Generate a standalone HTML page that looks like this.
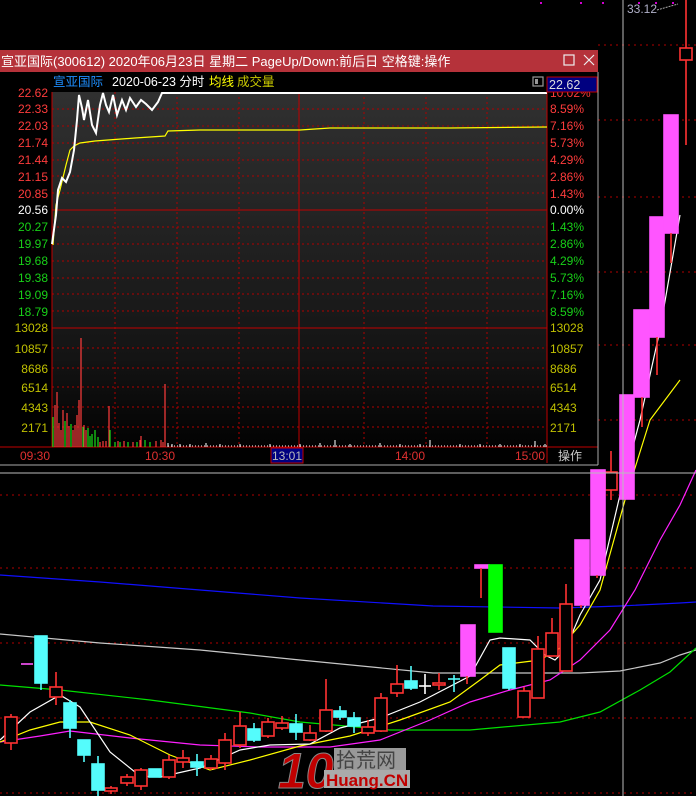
<!DOCTYPE html>
<html><head><meta charset="utf-8"><style>
html,body{margin:0;padding:0;background:#000;width:696px;height:796px;overflow:hidden}
svg{display:block}
text{font-family:"Liberation Sans","Noto Sans CJK SC",sans-serif}
</style></head><body>
<svg width="696" height="796" viewBox="0 0 696 796" xmlns="http://www.w3.org/2000/svg">
<defs>
<linearGradient id="bg" x1="0" y1="0" x2="0" y2="1">
<stop offset="0" stop-color="#303030"/><stop offset="0.55" stop-color="#1c1c1c"/><stop offset="0.75" stop-color="#141414"/><stop offset="1" stop-color="#020202"/>
</linearGradient>
</defs>
<!-- background dotted lines main chart -->
<g stroke="#b00000" stroke-dasharray="2,4" stroke-width="1">
<line x1="598" y1="45" x2="696" y2="45"/><line x1="598" y1="120" x2="696" y2="120"/>
<line x1="598" y1="197" x2="696" y2="197"/><line x1="598" y1="272" x2="696" y2="272"/>
<line x1="598" y1="345" x2="696" y2="345"/><line x1="598" y1="420" x2="696" y2="420"/>
<line x1="0" y1="495" x2="696" y2="495"/><line x1="0" y1="568" x2="696" y2="568"/>
<line x1="0" y1="643" x2="696" y2="643"/><line x1="0" y1="718" x2="696" y2="718"/>
<line x1="0" y1="793" x2="696" y2="793"/>
</g>
<g fill="#d000d0"><rect x="602" y="2" width="2" height="2"/><rect x="638" y="2" width="2" height="2"/><rect x="655" y="2" width="2" height="2"/><rect x="672" y="2" width="2" height="2"/><rect x="540" y="2" width="2" height="2"/><rect x="580" y="2" width="2" height="2"/></g>
<text x="627" y="13" fill="#b0b0c8" font-size="12">33.12</text>
<path d="M657 10 L678 4" stroke="#aaa" stroke-dasharray="2,1" fill="none"/>

<!-- MA lines -->
<g fill="none" stroke-width="1.2">
<polyline stroke="#1010ff" points="0,575 100,582 200,590 300,598 433,606 560,608 620,606 680,603 696,602"/>
<polyline stroke="#c8c8c8" points="0,634 100,643 200,650 300,660 433,673 580,673 620,671 660,663 680,655 696,650"/>
<polyline stroke="#00e000" points="0,685 60,690 150,700 250,713 300,722 390,730 470,730 560,722 600,712 640,690 670,672 696,648"/>
<polyline stroke="#ff20ff" points="0,742 40,736 70,731 130,738 200,745 260,747 330,747 380,740 430,720 470,702 510,690 550,680 580,660 610,630 635,590 660,540 680,505 696,470"/>
<polyline stroke="#ffff00" points="0,742 30,730 60,722 90,722 130,735 170,755 210,770 250,760 300,746 350,736 400,720 450,702 480,680 500,665 540,660 560,648 580,625 600,590 625,500 650,420 680,380"/>
<polyline stroke="#ffffff" points="0,740 30,712 60,695 80,707 110,752 140,776 160,777 200,768 240,750 270,745 310,744 340,728 380,718 420,702 470,676 490,640 500,638 530,640 545,655 555,660 565,650 580,615 600,580 620,495 640,420 660,330 680,215"/>
</g>

<!-- candles -->
<g stroke-width="1.6">
<!-- red hollow: wick + rect -->
<g stroke="#ff3232" fill="#000">
<line x1="11" y1="714" x2="11" y2="750"/><rect x="5" y="717" width="12" height="26"/>
<line x1="56" y1="672" x2="56" y2="705"/><rect x="50" y="687" width="12" height="10"/>
<line x1="111" y1="786" x2="111" y2="794"/><rect x="105" y="788" width="12" height="3"/>
<line x1="127" y1="774" x2="127" y2="786"/><rect x="121" y="777" width="12" height="6"/>
<line x1="141" y1="768" x2="141" y2="790"/><rect x="135" y="770" width="12" height="16"/>
<line x1="169" y1="755" x2="169" y2="779"/><rect x="163" y="760" width="12" height="17"/>
<line x1="183" y1="750" x2="183" y2="768"/><rect x="177" y="758" width="12" height="4"/>
<line x1="211" y1="755" x2="211" y2="770"/><rect x="205" y="759" width="12" height="9"/>
<line x1="225" y1="733" x2="225" y2="770"/><rect x="219" y="740" width="12" height="23"/>
<line x1="240" y1="712" x2="240" y2="748"/><rect x="234" y="726" width="12" height="19"/>
<line x1="268" y1="718" x2="268" y2="738"/><rect x="262" y="722" width="12" height="14"/>
<line x1="282" y1="716" x2="282" y2="730"/><rect x="276" y="723" width="12" height="5"/>
<line x1="310" y1="725" x2="310" y2="741"/><rect x="304" y="733" width="12" height="7"/>
<line x1="326" y1="679" x2="326" y2="732"/><rect x="320" y="710" width="12" height="21"/>
<line x1="368" y1="720" x2="368" y2="736"/><rect x="362" y="727" width="12" height="6"/>
<line x1="381" y1="693" x2="381" y2="732"/><rect x="375" y="698" width="12" height="33"/>
<line x1="397" y1="665" x2="397" y2="697"/><rect x="391" y="684" width="12" height="9"/>
<line x1="439" y1="673" x2="439" y2="690"/><rect x="433" y="683" width="12" height="2"/>
<line x1="524" y1="687" x2="524" y2="717"/><rect x="518" y="691" width="12" height="26"/>
<line x1="538" y1="636" x2="538" y2="698"/><rect x="532" y="649" width="12" height="49"/>
<line x1="552" y1="618" x2="552" y2="656"/><rect x="546" y="633" width="12" height="23"/>
<line x1="566" y1="584" x2="566" y2="671"/><rect x="560" y="604" width="12" height="67"/>
<line x1="611" y1="451" x2="611" y2="500"/><rect x="605" y="472" width="12" height="18"/>
<line x1="686" y1="0" x2="686" y2="145"/><rect x="680" y="48" width="12" height="12"/>
</g>
<!-- cyan -->
<g stroke="#54fcfc" fill="#54fcfc">
<line x1="41" y1="636" x2="41" y2="690"/><rect x="35" y="636" width="12" height="47"/>
<line x1="70" y1="700" x2="70" y2="738"/><rect x="64" y="703" width="12" height="25"/>
<line x1="84" y1="740" x2="84" y2="762"/><rect x="78" y="740" width="12" height="15"/>
<line x1="98" y1="756" x2="98" y2="796"/><rect x="92" y="764" width="12" height="26"/>
<rect x="149" y="769" width="12" height="8"/>
<line x1="197" y1="754" x2="197" y2="776"/><rect x="191" y="762" width="12" height="5"/>
<line x1="254" y1="723" x2="254" y2="742"/><rect x="248" y="729" width="12" height="11"/>
<line x1="296" y1="714" x2="296" y2="740"/><rect x="290" y="724" width="12" height="8"/>
<line x1="340" y1="706" x2="340" y2="720"/><rect x="334" y="711" width="12" height="6"/>
<line x1="354" y1="712" x2="354" y2="733"/><rect x="348" y="718" width="12" height="8"/>
<line x1="411" y1="666" x2="411" y2="690"/><rect x="405" y="681" width="12" height="7"/>
<line x1="454" y1="675" x2="454" y2="692"/><line x1="448" y1="679" x2="460" y2="679"/>
<line x1="509" y1="648" x2="509" y2="690"/><rect x="503" y="648" width="12" height="40"/>
</g>
<g stroke="#fff"><line x1="425" y1="674" x2="425" y2="694"/><line x1="419" y1="686" x2="431" y2="686"/></g>
<!-- magenta -->
<g stroke="#ff55ff" fill="#ff55ff">
<line x1="21" y1="664" x2="33" y2="664"/>
<rect x="461" y="625" width="14" height="51"/>
<rect x="475" y="565" width="14" height="3"/>
<rect x="575" y="540" width="14" height="65"/>
<rect x="591" y="470" width="14" height="105"/>
<rect x="620" y="395" width="14" height="104"/>
<rect x="634" y="310" width="15" height="87"/>
<rect x="650" y="217" width="14" height="120"/>
<rect x="664" y="115" width="14" height="118"/>
</g>
<g stroke="#ff3232"><line x1="467" y1="676" x2="467" y2="684"/><line x1="481" y1="568" x2="481" y2="598"/><line x1="581" y1="605" x2="581" y2="608"/><line x1="597" y1="575" x2="597" y2="578"/><line x1="642" y1="397" x2="642" y2="427"/><line x1="657" y1="337" x2="657" y2="375"/><line x1="671" y1="233" x2="671" y2="263"/></g>
<rect x="489" y="565" width="13" height="67" fill="#00ff00" stroke="#00ff00"/>
</g>

<!-- watermark -->
<g>
<text x="278" y="788" fill="#c00000" font-size="50" font-weight="bold" font-style="italic" stroke="#888" stroke-width="1">10</text>
<rect x="334" y="748" width="72" height="22" fill="#999"/>
<text x="336" y="767" fill="#444" font-size="20">拾荒网</text>
<rect x="324" y="770" width="86" height="18" fill="#aaa"/>
<text x="326" y="786" fill="#c00000" font-size="17" font-weight="bold">Huang.CN</text>
</g>

<!-- crosshair -->
<line x1="623" y1="0" x2="623" y2="796" stroke="#bbb" stroke-width="1"/>
<line x1="0" y1="473" x2="696" y2="473" stroke="#bbb" stroke-width="1"/>

<!-- POPUP -->
<rect x="0" y="50" width="598" height="415" fill="#000"/>
<rect x="0" y="50" width="598" height="22" fill="#b5323a"/>
<text x="1" y="66" fill="#fff" font-size="13">宣亚国际(300612) 2020年06月23日 星期二 PageUp/Down:前后日 空格键:操作</text>
<rect x="564" y="55" width="10" height="10" fill="none" stroke="#eee" stroke-width="1.2"/>
<path d="M584 55 L594 65 M594 55 L584 65" stroke="#eee" stroke-width="1.2"/>
<text x="53" y="86" fill="#1e8fff" font-size="12.5">宣亚国际</text>
<text x="112" y="86" fill="#fff" font-size="12.5">2020-06-23 分时</text>
<text x="209" y="86" fill="#ffff00" font-size="12.5">均线</text>
<text x="237" y="86" fill="#c8c800" font-size="12.5">成交量</text>
<rect x="533" y="77" width="10" height="9" fill="none" stroke="#999" stroke-width="1.2"/><rect x="535" y="79" width="3" height="5" fill="#999"/>
<rect x="547" y="77" width="50" height="15" fill="#000080" stroke="#c00000"/>
<text x="549" y="89" fill="#ddd" font-size="12.5">22.62</text>

<rect x="52" y="92" width="495" height="355" fill="url(#bg)"/>
<!-- price grid -->
<g stroke="#b00000" stroke-dasharray="2,3">
<line x1="52" y1="109" x2="547" y2="109"/><line x1="52" y1="126" x2="547" y2="126"/><line x1="52" y1="143" x2="547" y2="143"/><line x1="52" y1="160" x2="547" y2="160"/><line x1="52" y1="176" x2="547" y2="176"/><line x1="52" y1="193" x2="547" y2="193"/>
<line x1="52" y1="227" x2="547" y2="227"/><line x1="52" y1="244" x2="547" y2="244"/><line x1="52" y1="261" x2="547" y2="261"/><line x1="52" y1="278" x2="547" y2="278"/><line x1="52" y1="294" x2="547" y2="294"/><line x1="52" y1="311" x2="547" y2="311"/>
<line x1="52" y1="348" x2="547" y2="348"/><line x1="52" y1="368" x2="547" y2="368"/><line x1="52" y1="387" x2="547" y2="387"/><line x1="52" y1="407" x2="547" y2="407"/><line x1="52" y1="427" x2="547" y2="427"/>
<line x1="115" y1="92" x2="115" y2="447"/><line x1="177" y1="92" x2="177" y2="447"/><line x1="239" y1="92" x2="239" y2="447"/><line x1="364" y1="92" x2="364" y2="447"/><line x1="426" y1="92" x2="426" y2="447"/><line x1="487" y1="92" x2="487" y2="447"/>
</g>
<g stroke="#c00000" stroke-width="1">
<line x1="52" y1="210" x2="547" y2="210"/><line x1="52" y1="328" x2="547" y2="328"/>
<line x1="299" y1="92" x2="299" y2="447"/>
<line x1="52" y1="92" x2="52" y2="447"/><line x1="547" y1="92" x2="547" y2="463"/>
<line x1="0" y1="447" x2="598" y2="447"/>
</g>
<!-- volume bars -->
<g stroke-width="1.2">
<g stroke="#ff3c3c">
<path d="M55 447V405 M57 447V392 M59 447V423 M61 447V430 M63 447V410 M67 447V413 M69 447V426 M73 447V430 M75 447V425 M77 447V415 M79 447V400 M81 447V338 M84 447V425 M86 447V430 M109 447V406 M141 447V436 M165 447V384 M161 447V440 M163 447V442"/>
</g>
<g stroke="#18e018">
<path d="M53 447V417 M65 447V421 M71 447V424 M83 447V427 M88 447V428 M90 447V436 M92 447V434 M95 447V430 M98 447V437 M110 447V430 M115 447V442 M120 447V442 M128 447V442 M137 447V442 M145 447V440 M150 447V442"/>
</g>
<g stroke="#ff3c3c"><path d="M100 447V442 M103 447V441 M106 447V441 M118 447V441 M124 447V441 M133 447V442 M140 447V440 M156 447V441"/></g>
<g stroke="#ddd"><path d="M168 447V443 M172 447V444 M180 447V444 M190 447V444 M206 447V443 M220 447V444 M240 447V444 M270 447V444 M300 447V444 M320 447V443 M335 447V440 M350 447V444 M380 447V443 M400 447V444 M420 447V444 M430 447V440 M460 447V444 M480 447V444 M500 447V444 M520 447V444 M535 447V441 M545 447V444"/></g>
<path d="M168 446H547" stroke="#ccc" stroke-dasharray="1,2"/>
</g>
<!-- price & avg lines -->
<polyline fill="none" stroke="#ffff00" stroke-width="1.2" points="53,245 56,205 60,190 66,165 70,150 74,146 80,143 95,141 108,140 135,138 165,136 168,131 200,130 300,130 330,128 450,128 547,127"/>
<polyline fill="none" stroke="#fff" stroke-width="2" points="52,244 56,215 58,190 62,178 66,182 70,172 74,150 77,120 79,95 82,108 84,120 88,100 92,125 96,133 100,105 103,93 106,105 109,112 113,95 117,115 122,100 126,110 130,98 136,107 141,100 146,104 152,110 158,102 162,93 547,93"/>

<!-- left labels -->
<g font-size="12" text-anchor="end">
<g fill="#ff3c3c"><text x="48" y="97">22.62</text><text x="48" y="113">22.33</text><text x="48" y="130">22.03</text><text x="48" y="147">21.74</text><text x="48" y="164">21.44</text><text x="48" y="181">21.15</text><text x="48" y="198">20.85</text></g>
<text x="48" y="214" fill="#fff">20.56</text>
<g fill="#18d018"><text x="48" y="231">20.27</text><text x="48" y="248">19.97</text><text x="48" y="265">19.68</text><text x="48" y="282">19.38</text><text x="48" y="299">19.09</text><text x="48" y="316">18.79</text></g>
<g fill="#c0c000"><text x="48" y="332">13028</text><text x="48" y="353">10857</text><text x="48" y="373">8686</text><text x="48" y="392">6514</text><text x="48" y="412">4343</text><text x="48" y="432">2171</text></g>
</g>
<g font-size="12">
<text x="550" y="97" fill="#ff3c3c">10.02%</text>
<rect x="547" y="77" width="50" height="15" fill="#000080" stroke="#c00000"/>
<text x="549" y="89" fill="#ddd" font-size="12.5">22.62</text>
<g fill="#ff3c3c"><text x="550" y="113">8.59%</text><text x="550" y="130">7.16%</text><text x="550" y="147">5.73%</text><text x="550" y="164">4.29%</text><text x="550" y="181">2.86%</text><text x="550" y="198">1.43%</text></g>
<text x="550" y="214" fill="#fff">0.00%</text>
<g fill="#18d018"><text x="550" y="231">1.43%</text><text x="550" y="248">2.86%</text><text x="550" y="265">4.29%</text><text x="550" y="282">5.73%</text><text x="550" y="299">7.16%</text><text x="550" y="316">8.59%</text></g>
<g fill="#c0c000"><text x="550" y="332">13028</text><text x="550" y="353">10857</text><text x="550" y="373">8686</text><text x="550" y="392">6514</text><text x="550" y="412">4343</text><text x="550" y="432">2171</text></g>
</g>
<!-- time axis -->
<g font-size="12" fill="#e03030" text-anchor="middle">
<text x="35" y="460">09:30</text><text x="160" y="460">10:30</text><text x="410" y="460">14:00</text><text x="530" y="460">15:00</text>
</g>
<rect x="271" y="448" width="32" height="15" fill="#000080" stroke="#c00000"/>
<text x="287" y="460" font-size="12" fill="#bbb" text-anchor="middle">13:01</text>
<text x="570" y="460" font-size="12" fill="#ccc" text-anchor="middle">操作</text>
<line x1="0" y1="465" x2="598" y2="465" stroke="#aaa"/>
<line x1="598" y1="72" x2="598" y2="465" stroke="#aaa"/>
</svg>
</body></html>
